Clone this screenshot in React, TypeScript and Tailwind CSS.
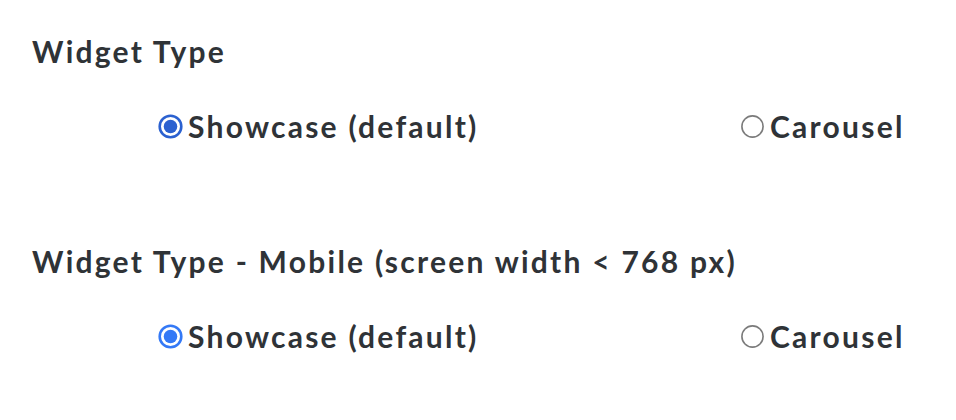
import React from "react";

function Radio({ checked, color }: { checked: boolean; color?: string }) {
  if (checked) {
    return (
      <svg width="25" height="25" viewBox="0 0 25 25" className="shrink-0">
        <circle cx="12.5" cy="12.5" r="10.8" fill="white" stroke={color} strokeWidth="2.6" />
        <circle cx="12.5" cy="12.5" r="6.8" fill={color} />
      </svg>
    );
  }
  return (
    <svg width="25" height="25" viewBox="0 0 25 25" className="shrink-0">
      <circle cx="12.5" cy="12.5" r="10.6" fill="white" stroke="#7b7b7b" strokeWidth="1.6" />
    </svg>
  );
}

function Option({ label, checked, color }: { label: string; checked: boolean; color?: string }) {
  return (
    <label className="flex items-center gap-[5px]">
      <Radio checked={checked} color={color} />
      <span>{label}</span>
    </label>
  );
}

export default function App() {
  return (
    <div
      className="w-[956px] h-[420px] bg-white text-[#2f3337] font-bold text-[30px] leading-[36px] tracking-[0.075em] pt-[33px] pl-[32px]"
      style={{ fontFamily: "Lato, 'Liberation Sans', sans-serif" }}
    >
      <div>Widget Type</div>
      <div className="flex items-center mt-[39px] pl-[126px]">
        <div className="w-[582px]">
          <Option label="Showcase (default)" checked color="#2b61d0" />
        </div>
        <Option label="Carousel" checked={false} />
      </div>
      <div className="mt-[99px]">Widget Type - Mobile (screen width &lt; 768 px)</div>
      <div className="flex items-center mt-[39px] pl-[126px]">
        <div className="w-[582px]">
          <Option label="Showcase (default)" checked color="#3479f6" />
        </div>
        <Option label="Carousel" checked={false} />
      </div>
    </div>
  );
}
